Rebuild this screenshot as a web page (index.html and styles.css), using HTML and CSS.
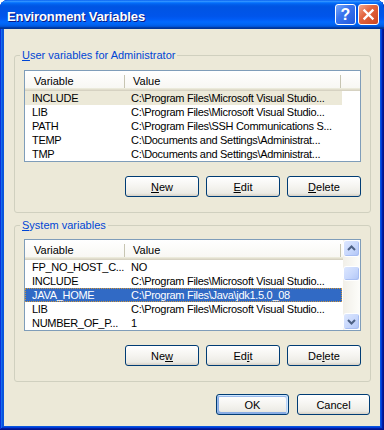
FILE: index.html
```html
<!DOCTYPE html>
<html lang="en">
<head>
    <meta charset="UTF-8">
    <title>Environment Variables</title>
    <link rel="stylesheet" href="styles.css">
</head>
<body>
    <div class="window">
        <!-- Title Bar -->
        <div class="title-bar">
            <span class="title-text">Environment Variables</span>
            <div class="title-controls">
                <button class="ctl ctl-help">?</button>
                <button class="ctl ctl-close">
                    <svg width="19" height="19" viewBox="0 0 19 19">
                        <path d="M5.5 5.5 L13.5 13.5 M13.5 5.5 L5.5 13.5" stroke="#fff" stroke-width="2.4" stroke-linecap="square"/>
                    </svg>
                </button>
            </div>
        </div>

        <div class="client">
            <!-- User variables -->
            <div class="group">
                <span class="group-label"><u>U</u>ser variables for Administrator</span>
                <div class="listview">
                    <div class="lv-main">
                        <div class="lv-header">
                            <span class="col col-name">Variable</span>
                            <span class="col col-value">Value</span>
                        </div>
                        <div class="lv-row inactive"><span class="cell-name">INCLUDE</span><span class="cell-value">C:\Program Files\Microsoft Visual Studio...</span></div>
                        <div class="lv-row"><span class="cell-name">LIB</span><span class="cell-value">C:\Program Files\Microsoft Visual Studio...</span></div>
                        <div class="lv-row"><span class="cell-name">PATH</span><span class="cell-value">C:\Program Files\SSH Communications S...</span></div>
                        <div class="lv-row"><span class="cell-name">TEMP</span><span class="cell-value">C:\Documents and Settings\Administrat...</span></div>
                        <div class="lv-row"><span class="cell-name">TMP</span><span class="cell-value">C:\Documents and Settings\Administrat...</span></div>
                    </div>
                </div>
                <div class="btn-row">
                    <button class="btn"><u>N</u>ew</button>
                    <button class="btn"><u>E</u>dit</button>
                    <button class="btn"><u>D</u>elete</button>
                </div>
            </div>

            <!-- System variables -->
            <div class="group group-system">
                <span class="group-label"><u>S</u>ystem variables</span>
                <div class="listview">
                    <div class="lv-main">
                        <div class="lv-header">
                            <span class="col col-name">Variable</span>
                            <span class="col col-value">Value</span>
                        </div>
                        <div class="lv-row"><span class="cell-name">FP_NO_HOST_C...</span><span class="cell-value">NO</span></div>
                        <div class="lv-row"><span class="cell-name">INCLUDE</span><span class="cell-value">C:\Program Files\Microsoft Visual Studio...</span></div>
                        <div class="lv-row selected"><span class="cell-name">JAVA_HOME</span><span class="cell-value">C:\Program Files\Java\jdk1.5.0_08</span></div>
                        <div class="lv-row"><span class="cell-name">LIB</span><span class="cell-value">C:\Program Files\Microsoft Visual Studio...</span></div>
                        <div class="lv-row"><span class="cell-name">NUMBER_OF_P...</span><span class="cell-value">1</span></div>
                    </div>
                    <div class="scrollbar">
                        <div class="sb-btn">
                            <svg width="15" height="15" viewBox="0 0 15 15"><path d="M4 9 L7.5 5.5 L11 9" fill="none" stroke="#4D6185" stroke-width="2"/></svg>
                        </div>
                        <div class="sb-track"><div class="sb-thumb"></div></div>
                        <div class="sb-btn">
                            <svg width="15" height="15" viewBox="0 0 15 15"><path d="M4 6 L7.5 9.5 L11 6" fill="none" stroke="#4D6185" stroke-width="2"/></svg>
                        </div>
                    </div>
                </div>
                <div class="btn-row">
                    <button class="btn">Ne<u>w</u></button>
                    <button class="btn">Ed<u>i</u>t</button>
                    <button class="btn">De<u>l</u>ete</button>
                </div>
            </div>

            <!-- OK / Cancel -->
            <div class="dialog-buttons">
                <button class="btn btn-default">OK</button>
                <button class="btn">Cancel</button>
            </div>
        </div>
    </div>
</body>
</html>
```

FILE: styles.css
```css
/* General Reset */
* {
    margin: 0;
    padding: 0;
    box-sizing: border-box;
}

body {
    background: #fff;
    font-family: 'Liberation Sans', Arial, sans-serif;
    font-size: 11px;
    color: #000;
}

/* Window Frame */
.window {
    width: 384px;
    height: 430px;
    display: flex;
    flex-direction: column;
    background: #0855DD;
    border-radius: 8px 8px 0 0;
    box-shadow: inset -1px -1px #00138C, inset 1px 1px #0831D9,
                inset -2px -2px #001EA0, inset 2px 2px #166AEE,
                inset -3px -3px #003BDA, inset 3px 3px #0855DD;
}

/* Title Bar */
.title-bar {
    height: 29px;
    display: flex;
    align-items: center;
    justify-content: space-between;
    padding: 0 5px 0 7px;
    border-radius: 8px 8px 0 0;
    background: linear-gradient(to bottom, #0058EE 0%, #3593FF 4%, #288EFF 6%, #127DFF 8%, #036FFC 10%, #0262EE 14%, #0057E5 20%, #0054E3 24%, #0055EB 56%, #005BF5 66%, #026AFE 76%, #0062EF 86%, #0052D6 92%, #0040AB 94%, #003092 100%);
}

.title-text {
    margin-top: 4px;
    font-size: 13px;
    font-weight: bold;
    color: #fff;
    text-shadow: 1px 1px #0A1883;
    letter-spacing: -0.1px;
}

.title-controls {
    display: flex;
    gap: 2px;
}

.ctl {
    width: 21px;
    height: 21px;
    border: 1px solid #fff;
    border-radius: 3px;
    display: flex;
    align-items: center;
    justify-content: center;
    color: #fff;
}

.ctl-help {
    font-family: 'Liberation Sans', Arial, sans-serif;
    font-size: 16px;
    font-weight: bold;
    background: linear-gradient(135deg, #7AA8FA 0%, #3A74EE 40%, #2259DC 100%);
}

.ctl-close {
    background: linear-gradient(135deg, #F2A88E 0%, #E3653F 40%, #CB4521 100%);
}

/* Client Area */
.client {
    flex: 1;
    margin: 0 4px 4px;
    padding: 26px 9px 0 10px;
    background: #ECE9D8;
    display: flex;
    flex-direction: column;
}

/* Group Box */
.group {
    display: flex;
    flex-direction: column;
    border: 1px solid #D0D0BF;
    border-radius: 3px;
    padding: 0 9px 15px;
}

.group-system {
    margin-top: 12px;
}

.group-label {
    align-self: flex-start;
    margin: -7px 0 0 -4px;
    padding: 0 2px;
    line-height: 13px;
    color: #0046D5;
    background: #ECE9D8;
}

/* List View */
.listview {
    margin-top: 8px;
    height: 92px;
    display: flex;
    border: 1px solid #7F9DB9;
    background: #fff;
    overflow: hidden;
}

.group-system .listview {
    margin-top: 7px;
}

.lv-main {
    flex: 1;
    min-width: 0;
}

.lv-header {
    display: flex;
    height: 20px;
    background: linear-gradient(to bottom, #FFFFFF, #F7F6F1);
    box-shadow: inset 0 -1px #D6D2C2, inset 0 -2px #E2DECD, inset 0 -3px #EBEADB;
}

.col {
    margin: 4px 0 3px;
    line-height: 13px;
    border-right: 1px solid #C7C5B2;
    white-space: nowrap;
}

.col-name {
    width: 100px;
    padding-left: 9px;
}

.col-value {
    width: 216px;
    padding-left: 8px;
}

.lv-row {
    display: flex;
    width: 317px;
    height: 14px;
    line-height: 14px;
    white-space: nowrap;
    letter-spacing: -0.3px;
}

.cell-name {
    width: 100px;
    padding-left: 7px;
    overflow: hidden;
}

.cell-value {
    width: 217px;
    padding-left: 6px;
    overflow: hidden;
}

.lv-row.inactive {
    background: #ECE9D8;
}

.lv-row.selected {
    background: #316AC5;
    color: #fff;
    outline: 1px dotted #CE953A;
    outline-offset: -1px;
}

/* Scroll Bar */
.scrollbar {
    width: 17px;
    display: flex;
    flex-direction: column;
    background: linear-gradient(to right, #F1EFE8, #FDFDFA);
}

.sb-btn,
.sb-thumb {
    border: 1px solid #fff;
    border-radius: 3px;
    background: linear-gradient(135deg, #DDE7FE 0%, #C7D7FC 55%, #B0C4F6 100%);
    box-shadow: inset -1px -1px #A8BEF2;
}

.sb-btn {
    height: 17px;
    display: flex;
    align-items: center;
    justify-content: center;
}

.sb-track {
    flex: 1;
}

.sb-thumb {
    margin-top: 9px;
    height: 15px;
}

/* Buttons */
.btn-row {
    margin-top: 14px;
    display: flex;
    justify-content: flex-end;
    gap: 7px;
}

.btn {
    width: 74px;
    height: 21px;
    border: 1px solid #003C74;
    border-radius: 3px;
    font-family: 'Liberation Sans', Arial, sans-serif;
    font-size: 11px;
    color: #000;
    background: linear-gradient(to bottom, #FFFFFF 0%, #F5F4F0 50%, #ECEBE5 85%, #D6D0C5 100%);
}

.dialog-buttons {
    margin-top: 12px;
    margin-right: 1px;
    display: flex;
    justify-content: flex-end;
    gap: 8px;
}

.dialog-buttons .btn {
    width: 73px;
}

.btn-default {
    box-shadow: inset -1px 1px #CEE7FF, inset 1px 2px #98B8EA,
                inset -2px 2px #BCD4F6, inset 1px -1px #89ADE4,
                inset 2px -2px #89ADE4;
}
```
